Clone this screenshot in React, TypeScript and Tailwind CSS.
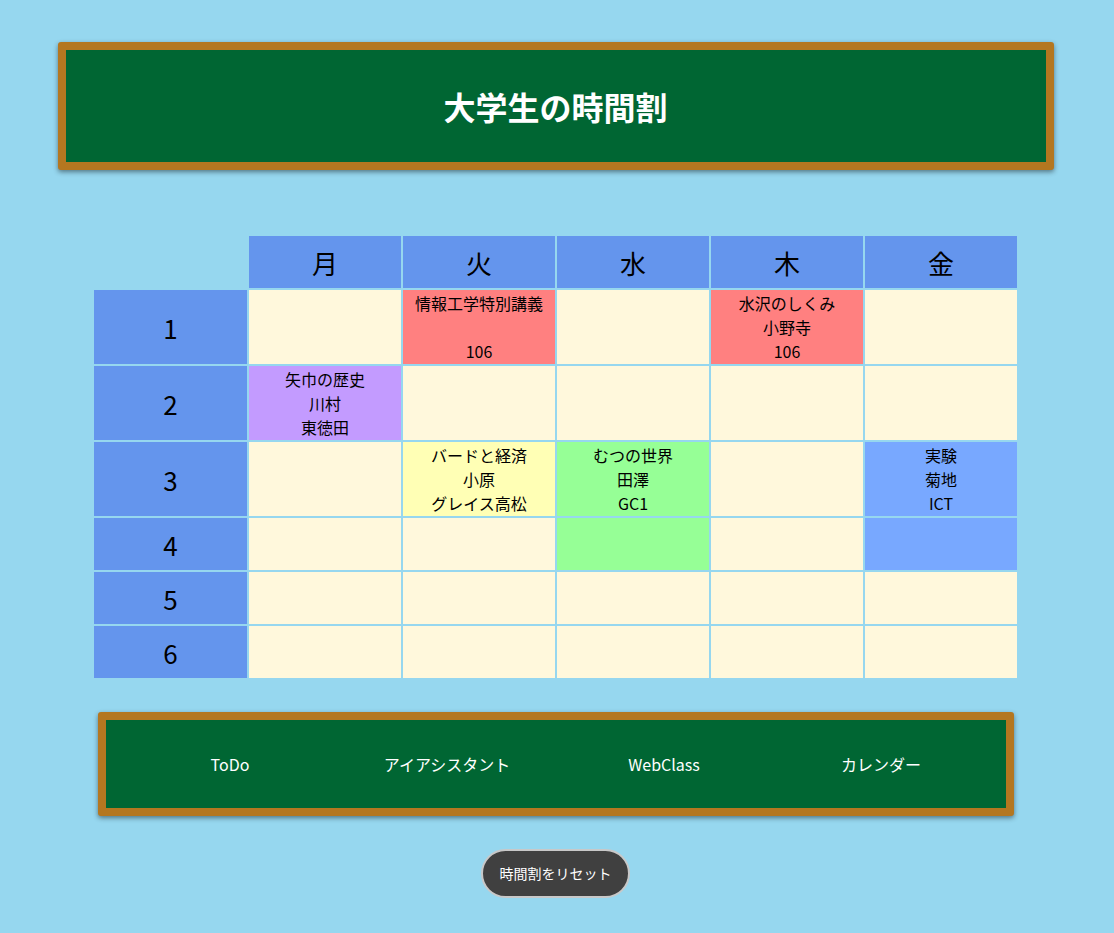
import React from 'react';

type Cell = { name: string; teacher: string; room: string; color: string } | null;

const days = ['月', '火', '水', '木', '金'];

// rows[period][day]
const rows: { h: string; cells: Cell[] }[] = [
  {
    h: 'h-[74px]',
    cells: [
      null,
      { name: '情報工学特別講義', teacher: '', room: '106', color: 'bg-[#ff8080]' },
      null,
      { name: '水沢のしくみ', teacher: '小野寺', room: '106', color: 'bg-[#ff8080]' },
      null,
    ],
  },
  {
    h: 'h-[74px]',
    cells: [
      { name: '矢巾の歴史', teacher: '川村', room: '東徳田', color: 'bg-[#c39bff]' },
      null,
      null,
      null,
      null,
    ],
  },
  {
    h: 'h-[74px]',
    cells: [
      null,
      { name: 'バードと経済', teacher: '小原', room: 'グレイス高松', color: 'bg-[#ffffb5]' },
      { name: 'むつの世界', teacher: '田澤', room: 'GC1', color: 'bg-[#96ff96]' },
      null,
      { name: '実験', teacher: '菊地', room: 'ICT', color: 'bg-[#78a8ff]' },
    ],
  },
  {
    h: 'h-[52px]',
    cells: [
      null,
      null,
      { name: '', teacher: '', room: '', color: 'bg-[#96ff96]' },
      null,
      { name: '', teacher: '', room: '', color: 'bg-[#78a8ff]' },
    ],
  },
  { h: 'h-[52px]', cells: [null, null, null, null, null] },
  { h: 'h-[52px]', cells: [null, null, null, null, null] },
];

const links = ['ToDo', 'アイアシスタント', 'WebClass', 'カレンダー'];

export default function App() {
  return (
    <div
      className="min-h-[933px] bg-[#96d7ef] pt-[42px] pb-9 pr-[3px]"
      style={{ fontFamily: '"Noto Sans CJK JP", "Noto Sans", sans-serif' }}
    >
      {/* Title board */}
      <div className="mx-auto w-[996px] h-[128px] rounded-[3px] border-[8px] border-[#b47720] bg-[#006633] shadow-[0_2px_5px_rgba(0,0,0,0.45)] flex items-center justify-center">
        <h1 className="text-[32px] font-bold text-white leading-none">大学生の時間割</h1>
      </div>

      {/* Timetable */}
      <div className="mt-[66px] mx-auto w-[923px] grid grid-cols-[153px_repeat(5,152px)] gap-[2px] text-black">
        <div className="h-[52px]" />
        {days.map((d) => (
          <div key={d} className="h-[52px] bg-[#6495ed] flex items-center justify-center text-[26px]">
            {d}
          </div>
        ))}
        {rows.map((row, i) => (
          <React.Fragment key={i}>
            <div className={`${row.h} bg-[#6495ed] flex items-center justify-center text-[26px]`}>{i + 1}</div>
            {row.cells.map((c, j) => (
              <div
                key={j}
                className={`${row.h} ${c ? c.color : 'bg-[#fff8dc]'} pt-[1px] flex flex-col items-center text-[16px] leading-[24px]`}
              >
                {c && c.name && (
                  <>
                    <span>{c.name}</span>
                    <span className="h-[24px]">{c.teacher}</span>
                    <span>{c.room}</span>
                  </>
                )}
              </div>
            ))}
          </React.Fragment>
        ))}
      </div>

      {/* Link board */}
      <div className="mt-[34px] mx-auto w-[916px] h-[104px] rounded-[3px] border-[8px] border-[#b47720] bg-[#006633] shadow-[0_2px_5px_rgba(0,0,0,0.45)] px-4 grid grid-cols-4 items-center">
        {links.map((l) => (
          <a key={l} href="#" className="text-center text-white text-[16px]">
            {l}
          </a>
        ))}
      </div>

      <div className="mt-[33px] flex justify-center">
        <button className="w-[149px] h-[49px] rounded-full border-2 border-[#c8c8c8] bg-[#404040] text-white text-[14px]">
          時間割をリセット
        </button>
      </div>
    </div>
  );
}
